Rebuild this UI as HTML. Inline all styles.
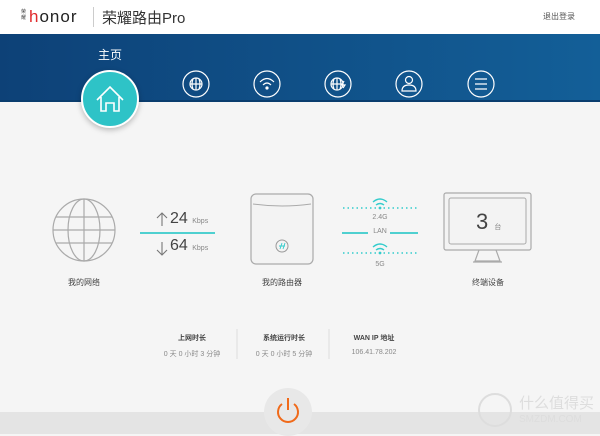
<!DOCTYPE html>
<html><head><meta charset="utf-8"><style>
*{margin:0;padding:0;box-sizing:border-box}
body{width:600px;height:434px;overflow:hidden;background:#f5f5f5;font-family:"Liberation Sans","Noto Sans CJK SC",sans-serif;position:relative}
.a{position:absolute}
.t{position:absolute;white-space:nowrap;transform:translateX(-50%)}
</style></head><body>
<div class="a" style="left:0;top:0;width:600px;height:34px;background:#fff"></div>
<div class="a" style="left:0;top:34px;width:600px;height:67px;background:linear-gradient(90deg,#0d4177,#135f98)"></div>
<div class="a" style="left:0;top:100px;width:600px;height:2px;background:#0a3d6e"></div>
<div class="a" style="left:21px;top:9px;font-size:5px;line-height:6px;color:#444;width:7px">荣<br>耀</div>
<div class="a" style="left:29px;top:7px;font:17px 'Liberation Sans',sans-serif;color:#222;letter-spacing:1px"><span style="color:#e0292b">h</span>onor</div>
<div class="a" style="left:93px;top:7px;width:1px;height:20px;background:#ccc"></div>
<div class="a" style="left:102px;top:7px;font-size:15px;color:#333">荣耀路由Pro</div>
<div class="a" style="left:543px;top:11px;font-size:8px;color:#555">退出登录</div>
<div class="t" style="left:110px;top:46px;font-size:12px;color:#fff">主页</div>
<div class="a" style="left:81px;top:70px;width:58px;height:58px;border-radius:50%;background:#2ec3c7;border:2px solid #fff;box-shadow:0 2px 6px rgba(0,0,0,.25)"></div>
<svg class="a" style="left:0;top:0" width="600" height="434">
<g fill="none" stroke="#fff" stroke-width="1.6"><path d="M97 100 L110 87 L123 100 M101 97 V111 H106 V103 H114 V111 H119 V97"/></g>
<g fill="none" stroke="#fff" stroke-width="1.2">
<circle cx="196" cy="84" r="13"/><circle cx="196" cy="84" r="6"/><path d="M190 84H202M196 78V90M193 79Q191 84 193 89M199 79Q201 84 199 89"/>
<circle cx="267" cy="84" r="13"/><path d="M260 82Q267 75 274 82M263 85Q267 81 271 85"/><circle cx="267" cy="88" r="1" fill="#fff"/>
<circle cx="338" cy="84" r="13"/><circle cx="337" cy="84" r="6"/><path d="M331 84H343M337 78V90M334 79Q332 84 334 89M340 79Q342 84 340 89M344 81L342 85H345L343 88"/>
<circle cx="409" cy="84" r="13"/><circle cx="409" cy="80" r="3.5"/><path d="M402 91Q402 85 409 85Q416 85 416 91Z"/>
<circle cx="481" cy="84" r="13"/><path d="M475 79H487M475 84H487M475 89H487"/>
</g>
<g fill="none" stroke="#aaa" stroke-width="1.2"><circle cx="84" cy="230" r="31"/><path d="M53 230H115M84 199V261M56 217H112M56 243H112"/><ellipse cx="84" cy="230" rx="16" ry="31"/></g>
<line x1="140" y1="233" x2="215" y2="233" stroke="#4fd0d0" stroke-width="2"/>
<path d="M162 213V226M157 218L162 213L167 218M162 242V255M157 250L162 255L167 250" stroke="#777" fill="none" stroke-width="1.1"/>
<rect x="251" y="194" width="62" height="70" rx="5" fill="#f3f3f3" stroke="#aaa" stroke-width="1.2"/>
<path d="M253 204Q282 208 311 204" stroke="#aaa" fill="none"/>
<circle cx="282" cy="246" r="6" fill="none" stroke="#999"/>
<path d="M280 249L282 243M283 249L285 243M279 246H285" stroke="#3cc" stroke-width=".9"/>
<g stroke="#3cc" stroke-width="1.4" stroke-dasharray="1.5 3"><line x1="343" y1="208" x2="418" y2="208"/><line x1="343" y1="253" x2="418" y2="253"/></g>
<line x1="342" y1="233" x2="368" y2="233" stroke="#4fd0d0" stroke-width="2"/><line x1="390" y1="233" x2="418" y2="233" stroke="#4fd0d0" stroke-width="2"/>
<g fill="none" stroke="#3cc" stroke-width="1.4"><path d="M373 202Q380 196 387 202M376 205Q380 202 384 205"/><path d="M373 247Q380 241 387 247M376 250Q380 247 384 250"/></g>
<circle cx="380" cy="208" r="1.4" fill="#3cc"/><circle cx="380" cy="253" r="1.4" fill="#3cc"/>
<rect x="444" y="193" width="87" height="57" rx="2" fill="#f3f3f3" stroke="#aaa" stroke-width="1.2"/>
<rect x="449" y="198" width="77" height="46" rx="2" fill="none" stroke="#aaa"/>
<path d="M479 250L475 261H500L496 250M473 262H502" stroke="#aaa" fill="none" stroke-width="1.2"/>
<line x1="237" y1="329" x2="237" y2="359" stroke="#ddd"/><line x1="329" y1="329" x2="329" y2="359" stroke="#ddd"/>
</svg>
<div class="a" style="left:170px;top:210px;font-size:16px;color:#444">24 <span style="font-size:7px;color:#888">Kbps</span></div>
<div class="a" style="left:170px;top:237px;font-size:16px;color:#444">64 <span style="font-size:7px;color:#888">Kbps</span></div>
<div class="t" style="left:380px;top:214px;font-size:7px;color:#888">2.4G</div>
<div class="t" style="left:380px;top:228px;font-size:7px;color:#888">LAN</div>
<div class="t" style="left:380px;top:261px;font-size:7px;color:#888">5G</div>
<div class="a" style="left:476px;top:209px;font-size:22px;color:#444">3 <span style="font-size:7px;color:#888">台</span></div>
<div class="t" style="left:84px;top:277px;font-size:8px;color:#444">我的网络</div>
<div class="t" style="left:282px;top:277px;font-size:8px;color:#444">我的路由器</div>
<div class="t" style="left:488px;top:277px;font-size:8px;color:#444">终端设备</div>
<div class="t" style="left:192px;top:333px;font-size:7px;font-weight:bold;color:#444">上网时长</div>
<div class="t" style="left:192px;top:349px;font-size:7px;color:#888">0 天 0 小时 3 分钟</div>
<div class="t" style="left:284px;top:333px;font-size:7px;font-weight:bold;color:#444">系统运行时长</div>
<div class="t" style="left:284px;top:349px;font-size:7px;color:#888">0 天 0 小时 5 分钟</div>
<div class="t" style="left:374px;top:333px;font-size:7px;font-weight:bold;color:#444">WAN IP 地址</div>
<div class="t" style="left:374px;top:349px;font-size:7px;color:#888">106.41.78.202</div>
<div class="a" style="left:0;top:412px;width:600px;height:22px;background:#e4e4e4"></div>
<div class="a" style="left:264px;top:388px;width:48px;height:48px;border-radius:50%;background:#e8e8e8"></div>
<svg class="a" style="left:0;top:0" width="600" height="434"><g fill="none" stroke="#f06a1a" stroke-width="2"><path d="M282 404A10 10 0 1 0 294 404"/><line x1="288" y1="398" x2="288" y2="410"/></g>
<circle cx="495" cy="410" r="16" fill="none" stroke="#ddd" stroke-width="2"/></svg>
<div class="a" style="left:519px;top:392px;font-size:15px;color:#ddd">什么值得买</div>
<div class="a" style="left:519px;top:414px;font-size:10px;color:#ddd">SMZDM.COM</div>
</body></html>
